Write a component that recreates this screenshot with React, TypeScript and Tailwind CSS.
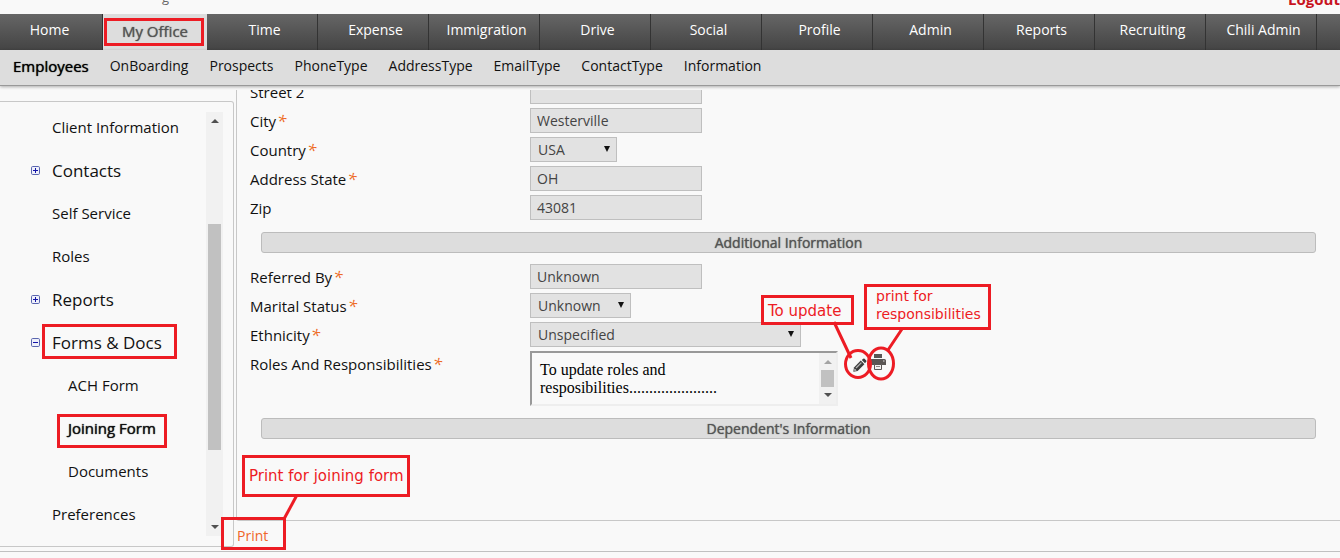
import React from 'react';
import clsx from 'clsx';

const tabs = [
  'Time',
  'Expense',
  'Immigration',
  'Drive',
  'Social',
  'Profile',
  'Admin',
  'Reports',
  'Recruiting',
  'Chili Admin',
];

const subTabs = [
  'OnBoarding',
  'Prospects',
  'PhoneType',
  'AddressType',
  'EmailType',
  'ContactType',
  'Information',
];

type TreeItem = {
  label: string;
  level: 0 | 1;
  toggle?: 'plus' | 'minus';
  current?: boolean;
  mark?: string;
};

const tree: TreeItem[] = [
  { label: 'Client Information', level: 0 },
  { label: 'Contacts', level: 0, toggle: 'plus' },
  { label: 'Self Service', level: 0 },
  { label: 'Roles', level: 0 },
  { label: 'Reports', level: 0, toggle: 'plus' },
  {
    label: 'Forms & Docs',
    level: 0,
    toggle: 'minus',
    mark: 'left-[42px] top-[3px] h-[35px] w-[135px]',
  },
  { label: 'ACH Form', level: 1 },
  {
    label: 'Joining Form',
    level: 1,
    current: true,
    mark: 'left-[57px] top-[7px] h-[34px] w-[110px]',
  },
  { label: 'Documents', level: 1 },
  { label: 'Preferences', level: 0 },
];

function Mark({ className }: { className: string }) {
  return (
    <span className={clsx('pointer-events-none absolute border-3 border-[#ed1c24]', className)} />
  );
}

function ToggleIcon({ kind }: { kind: 'plus' | 'minus' }) {
  return (
    <svg viewBox="0 0 9 9" className="size-[9px]" aria-hidden="true">
      <rect x="0.5" y="0.5" width="8" height="8" rx="1.2" fill="#eef0fa" stroke="#5a66ae" />
      <path d="M2 4.5h5" stroke="#1414a8" />
      {kind === 'plus' && <path d="M4.5 2v5" stroke="#1414a8" />}
    </svg>
  );
}

function Arrow({ up, className }: { up?: boolean; className?: string }) {
  return (
    <svg viewBox="0 0 8 4" className={clsx('h-[4px] w-[8px] fill-current', className)} aria-hidden="true">
      <path d={up ? 'M0 4 4 0 8 4Z' : 'M0 0 4 4 8 0Z'} />
    </svg>
  );
}

function Sidebar() {
  return (
    <aside className="mt-[11px] mb-[4px] flex w-[234px] shrink-0 rounded-r-[3px] border-y border-r border-[#c8c8c8] pt-[4px] pb-[10px]">
      <ul className="grow">
        {tree.map((item) => (
          <li key={item.label} className="relative flex h-[43px] items-center">
            {item.toggle && (
              <button
                type="button"
                aria-label={`Toggle ${item.label}`}
                className="absolute left-[31px]"
              >
                <ToggleIcon kind={item.toggle} />
              </button>
            )}
            <a
              href="#"
              className={clsx(
                'whitespace-nowrap text-[#111]',
                item.level === 0 ? 'pl-[52px]' : 'pl-[68px]',
                item.toggle ? 'text-[17px]' : 'pb-[2px] text-[15px]',
                item.current && '[text-shadow:0_0_1px_#000]',
              )}
            >
              {item.label}
            </a>
            {item.mark && <Mark className={item.mark} />}
          </li>
        ))}
      </ul>
      <div className="mt-[6px] mr-[10px] flex w-[17px] flex-col items-center bg-[#f1f1f1] py-[7px] text-[#505050]">
        <Arrow up />
        <div className="mt-[101px] mb-[75px] w-[13px] grow bg-[#c1c1c1]" />
        <Arrow />
      </div>
    </aside>
  );
}

function Row({
  id,
  label,
  required,
  children,
}: {
  id: string;
  label: string;
  required?: boolean;
  children: React.ReactNode;
}) {
  return (
    <div className="relative flex py-[2px]">
      <label htmlFor={id} className="h-[25px] w-[280px] shrink-0 pt-[3px] text-[15px] text-[#111]">
        {label}
        {required && (
          <span className="pl-px text-[17px] leading-none text-[#ee6a24] italic">*</span>
        )}
      </label>
      {children}
    </div>
  );
}

function TextField({ id, value }: { id: string; value: string }) {
  return (
    <input
      id={id}
      defaultValue={value}
      className="h-[25px] w-[172px] border border-[#bfbfbf] bg-[#e2e2e2] px-[6px] text-[#444]"
    />
  );
}

function SelectField({ id, value, width }: { id: string; value: string; width: string }) {
  return (
    <span className={clsx('relative', width)}>
      <select
        id={id}
        defaultValue={value}
        className="h-[25px] w-full appearance-none border border-[#bfbfbf] bg-[#e2e2e2] px-[7px] text-[#444]"
      >
        <option>{value}</option>
      </select>
      <svg
        viewBox="0 0 6 6"
        className="pointer-events-none absolute top-[9px] right-[7px] size-[6px]"
        aria-hidden="true"
      >
        <path d="M0 0h6L3 6Z" fill="#111" />
      </svg>
    </span>
  );
}

function SectionBar({ title }: { title: string }) {
  return (
    <h2 className="mt-[10px] mr-[24px] mb-[9px] ml-[11px] h-[21px] rounded-[3px] border border-[#bcbcbc] bg-[#ddd] text-center leading-[20px] text-[#555] [text-shadow:0_0_1px_#555]">
      {title}
    </h2>
  );
}

function PencilIcon() {
  return (
    <svg viewBox="0 0 14 14" className="size-[14px]" aria-hidden="true">
      <path d="M0.3 13.7 1 9.400 7.800 2.600 11.400 6.200 4.600 13Z" fill="#3c3c3c" />
      <path d="M8.800 2 10.200 0.800a1 1 0 0 1 1.400 0L13.200 2.400a1 1 0 0 1 0 1.400L12 5.200Z" fill="#3c3c3c" />
      <path d="M3 10 8.400 4.600" stroke="#b5b5b5" strokeWidth="1.300" />
      <path d="M1.600 10.400 3.600 12.400 1.200 12.800Z" fill="#ddd" />
    </svg>
  );
}

function PrinterIcon() {
  return (
    <svg viewBox="0 0 16 16" className="size-[16px]" aria-hidden="true">
      <path d="M4 0h8v4H4Z" fill="#5a5654" />
      <path d="M1.500 5h13A1.500 1.500 0 0 1 16 6.500V11h-3.500V9.500h-9V11H0V6.500A1.500 1.500 0 0 1 1.500 5Z" fill="#5a5654" />
      <path d="M3 9h10v2H3Z" fill="#5a5654" />
      <path d="M4.500 10.500h7v5h-7Z" fill="#f4f4f4" stroke="#5a5654" />
      <path d="M6 12.500h4" stroke="#8a8684" />
      <path d="M13 7h1.500" stroke="#ddd" />
    </svg>
  );
}

function RolesCallouts() {
  return (
    <div className="pointer-events-none absolute -top-[66px] left-[510px] h-[98px] w-[232px] font-['DejaVu_Sans'] leading-[18px] text-[#ed1c24]">
      <div className="absolute top-[12px] left-px h-[30px] w-[93px] border-3 border-[#ed1c24] pt-[4px] pl-[4px] text-[15px] whitespace-nowrap">
        To update
      </div>
      <div className="absolute top-px left-[104px] h-[46px] w-[127px] border-3 border-[#ed1c24] pl-[9px]">
        print for responsibilities
      </div>
      <svg
        viewBox="0 0 232 98"
        className="absolute inset-0 h-[98px] w-[232px]"
        fill="none"
        stroke="#ed1c24"
        strokeWidth="3"
        aria-hidden="true"
      >
        <path d="M74 39 91 75M142 46 128 67" />
        <ellipse cx="98" cy="81" rx="12.500" ry="13.500" />
        <ellipse cx="121" cy="80.500" rx="12.500" ry="15.500" />
      </svg>
    </div>
  );
}

function EmployeeForm() {
  return (
    <section className="grow overflow-hidden rounded-bl-[3px] border-b border-l border-[#c8c8c8] pl-[13px]">
      <form className="-mt-[13px]">
        <Row id="street2" label="Street 2">
          <TextField id="street2" value="" />
        </Row>
        <Row id="city" label="City" required>
          <TextField id="city" value="Westerville" />
        </Row>
        <Row id="country" label="Country" required>
          <SelectField id="country" value="USA" width="w-[87px]" />
        </Row>
        <Row id="state" label="Address State" required>
          <TextField id="state" value="OH" />
        </Row>
        <Row id="zip" label="Zip">
          <TextField id="zip" value="43081" />
        </Row>
        <SectionBar title="Additional Information" />
        <Row id="referred" label="Referred By" required>
          <TextField id="referred" value="Unknown" />
        </Row>
        <Row id="marital" label="Marital Status" required>
          <SelectField id="marital" value="Unknown" width="w-[101px]" />
        </Row>
        <Row id="ethnicity" label="Ethnicity" required>
          <SelectField id="ethnicity" value="Unspecified" width="w-[271px]" />
        </Row>
        <Row id="roles" label="Roles And Responsibilities" required>
          <div className="flex h-[55px] w-[308px] border-2 border-t-[#999] border-r-[#eee] border-b-[#eee] border-l-[#999]">
            <textarea
              id="roles"
              defaultValue={'To update roles and\nresposibilities......................'}
              className="h-full grow resize-none overflow-hidden pt-[8px] pl-[8px] font-['Liberation_Serif',serif] text-[16px] leading-[18px]"
            />
            <div className="flex w-[17px] flex-col items-center bg-[#f1f1f1] py-[7px]">
              <Arrow up className="text-[#a3a3a3]" />
              <div className="my-[6px] w-[13px] grow bg-[#c1c1c1]" />
              <Arrow className="text-[#505050]" />
            </div>
          </div>
          <div className="flex items-start pt-[3px] pl-[15px]">
            <button type="button" aria-label="Update responsibilities" className="pt-[4px]">
              <PencilIcon />
            </button>
            <button type="button" aria-label="Print responsibilities" className="pl-[3px]">
              <PrinterIcon />
            </button>
          </div>
          <RolesCallouts />
        </Row>
        <SectionBar title="Dependent's Information" />
      </form>
    </section>
  );
}

function FormFooter() {
  return (
    <footer className="relative flex h-[30px] shrink-0 items-center">
      <a href="#" className="pl-px text-[#f0662a]">
        Print
      </a>
      <div className="pointer-events-none absolute -top-[66px] -left-[15px] h-[96px] w-[190px] text-[#ed1c24]">
        <div className="absolute top-0 left-[21px] flex h-[42px] w-[168px] items-center border-3 border-[#ed1c24] pl-[4px] font-['DejaVu_Sans'] text-[15px] whitespace-nowrap">
          Print for joining form
        </div>
        <Mark className="top-[62px] left-0 h-[33px] w-[65px]" />
        <svg
          viewBox="0 0 190 96"
          className="absolute inset-0 h-[96px] w-[190px]"
          stroke="#ed1c24"
          strokeWidth="3"
          aria-hidden="true"
        >
          <path d="M76 40 63 64" />
        </svg>
      </div>
    </footer>
  );
}

export default function App() {
  return (
    <div className="bg-[#f9f9f9] font-['Open_Sans',sans-serif] text-[14px] leading-[20px] text-black">
      <div className="flex h-[14px] items-end justify-between overflow-hidden">
        <span className="pb-[7px] pl-[162px] text-[13px] text-[#666]">g</span>
        <a href="#" className="pb-[5px] text-[15px] font-bold text-[#c8141e]">
          Logout
        </a>
      </div>

      <nav className="flex h-[36px] bg-linear-to-b from-[#666] to-[#444] leading-[32px] text-white">
        <a href="#" className="w-[103px] shrink-0 border-r border-[#333] pr-[3px] text-center">
          Home
        </a>
        <a
          href="#"
          className="relative w-[104px] shrink-0 bg-[#ddd] text-center text-[15px] leading-[34px] text-[#555] [text-shadow:0_0_1px_#555]"
        >
          My Office
          <Mark className="top-[4px] left-px h-[28px] w-[100px]" />
        </a>
        {tabs.map((tab) => (
          <a key={tab} href="#" className="w-[111px] shrink-0 border-r border-[#333] pl-[5px] text-center">
            {tab}
          </a>
        ))}
      </nav>

      <nav className="relative z-10 flex h-[36px] gap-[21px] border-b border-[#999] bg-[#ddd] pl-[13px] leading-[31px] shadow-[0_1px_3px_rgba(0,0,0,0.3)]">
        <a href="#" className="text-[15px] leading-[33px] [text-shadow:0_0_1px_#000]">
          Employees
        </a>
        {subTabs.map((tab) => (
          <a key={tab} href="#" className="text-[#111]">
            {tab}
          </a>
        ))}
      </nav>

      <div className="mt-[4px] flex gap-[2px] border-b border-[#c0c0c0]">
        <Sidebar />
        <main className="flex min-w-0 grow flex-col">
          <EmployeeForm />
          <FormFooter />
        </main>
      </div>
      <div className="h-[6px]" />
    </div>
  );
}
